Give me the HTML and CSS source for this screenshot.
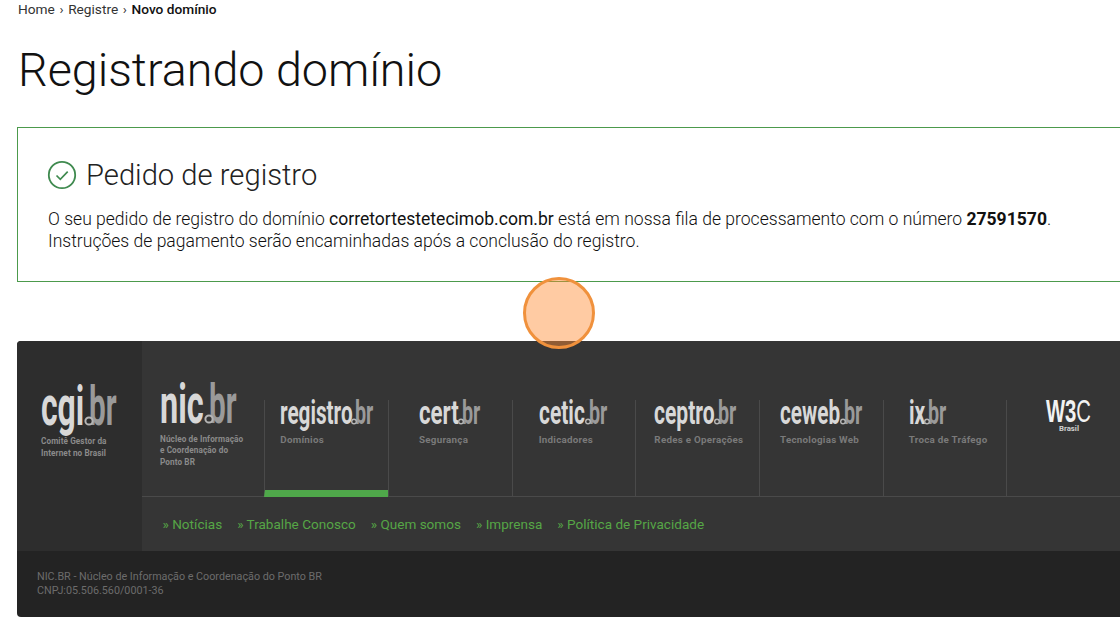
FILE: index.html
```html
<!DOCTYPE html>
<html lang="pt-BR">
<head>
    <meta charset="UTF-8">
    <meta name="viewport" content="width=device-width, initial-scale=1.0">
    <title>Registrando domínio</title>
    <link rel="stylesheet" href="styles.css">
</head>
<body>
    <nav class="breadcrumb">
        <a>Home</a><span class="sep">›</span><a>Registre</a><span class="sep">›</span><strong>Novo domínio</strong>
    </nav>

    <h1 class="page-title">Registrando domínio</h1>

    <section class="notice">
        <h2 class="notice-title">
            <svg class="check" width="30" height="30" viewBox="0 0 30 30" fill="none" stroke="#3f8a4f">
                <circle cx="15" cy="15" r="13.2" stroke-width="1.8"/>
                <path d="M9.5 15.5l3.8 3.8 7.4-7.6" stroke-width="1.7"/>
            </svg>
            Pedido de registro
        </h2>
        <p class="notice-text">O seu pedido de registro do domínio <b class="dom">corretortestetecimob.com.br</b> está em nossa fila de processamento com o número <b>27591570</b>.<br>Instruções de pagamento serão encaminhadas após a conclusão do registro.</p>
    </section>

    <footer class="site-footer">
        <div class="footer-top">
            <div class="cgi-col">
                <svg class="logo" width="78" height="46">
                    <text class="logo-name" transform="translate(0 41) scale(.57 1)" font-size="56">cgi</text>
                    <text class="logo-br" transform="translate(48 41) scale(.53 1)" font-size="56">br</text>
                    <circle class="logo-ring" cx="48" cy="37" r="3.6"/>
                </svg>
                <p class="logo-label big">Comitê Gestor da<br>Internet no Brasil</p>
            </div>
            <div class="main-col">
                <div class="org-nav">
                    <div class="nic-col">
                        <svg class="logo" width="78" height="44.5">
                            <text class="logo-name" transform="translate(0 40) scale(.58 1)" font-size="56">nic</text>
                            <text class="logo-br" transform="translate(49 40) scale(.53 1)" font-size="56">br</text>
                            <circle class="logo-ring" cx="49" cy="36" r="3.6"/>
                        </svg>
                        <p class="logo-label big">Núcleo de Informação<br>e Coordenação do<br>Ponto BR</p>
                    </div>
                    <div class="org-item item-registro active">
                        <svg class="logo" width="95" height="33">
                            <text class="logo-name" transform="translate(0 24) scale(.61 1)" font-size="34">registro</text>
                            <text class="logo-br" transform="translate(75 24) scale(.58 1)" font-size="34">br</text>
                            <circle class="logo-ring small" cx="74" cy="21.5" r="2.3"/>
                        </svg>
                        <span class="logo-label">Domínios</span>
                    </div>
                    <div class="org-item item-cert">
                        <svg class="logo" width="64" height="33">
                            <text class="logo-name" transform="translate(0 24) scale(.655 1)" font-size="34">cert</text>
                            <text class="logo-br" transform="translate(43 24) scale(.58 1)" font-size="34">br</text>
                            <circle class="logo-ring small" cx="42" cy="21.5" r="2.3"/>
                        </svg>
                        <span class="logo-label">Segurança</span>
                    </div>
                    <div class="org-item item-cetic">
                        <svg class="logo" width="72" height="33">
                            <text class="logo-name" transform="translate(0 24) scale(.617 1)" font-size="34">cetic</text>
                            <text class="logo-br" transform="translate(50 24) scale(.58 1)" font-size="34">br</text>
                            <circle class="logo-ring small" cx="49" cy="21.5" r="2.3"/>
                        </svg>
                        <span class="logo-label">Indicadores</span>
                    </div>
                    <div class="org-item item-ceptro">
                        <svg class="logo" width="85" height="33">
                            <text class="logo-name" transform="translate(0 24) scale(.62 1)" font-size="34">ceptro</text>
                            <text class="logo-br" transform="translate(64 24) scale(.58 1)" font-size="34">br</text>
                            <circle class="logo-ring small" cx="63" cy="21.5" r="2.3"/>
                        </svg>
                        <span class="logo-label">Redes e Operações</span>
                    </div>
                    <div class="org-item item-ceweb">
                        <svg class="logo" width="84" height="33">
                            <text class="logo-name" transform="translate(0 24) scale(.61 1)" font-size="34">ceweb</text>
                            <text class="logo-br" transform="translate(64 24) scale(.58 1)" font-size="34">br</text>
                            <circle class="logo-ring small" cx="63" cy="21.5" r="2.3"/>
                        </svg>
                        <span class="logo-label">Tecnologias Web</span>
                    </div>
                    <div class="org-item item-ix">
                        <svg class="logo" width="40" height="33">
                            <text class="logo-name" transform="translate(0 24) scale(.62 1)" font-size="34">ix</text>
                            <text class="logo-br" transform="translate(19 24) scale(.58 1)" font-size="34">br</text>
                            <circle class="logo-ring small" cx="18" cy="21.5" r="2.3"/>
                        </svg>
                        <span class="logo-label">Troca de Tráfego</span>
                    </div>
                    <div class="org-item item-w3c">
                        <svg class="logo" width="48" height="34">
                            <text class="w3c-mark" x="0" y="22" font-size="31" textLength="45" lengthAdjust="spacingAndGlyphs"><tspan class="w3c-bold">W3</tspan>C</text>
                            <text class="w3c-sub" x="13" y="31" font-size="7" textLength="20" lengthAdjust="spacingAndGlyphs">Brasil</text>
                        </svg>
                    </div>
                </div>
                <div class="footer-links">
                    <a>» Notícias</a>
                    <a>» Trabalhe Conosco</a>
                    <a>» Quem somos</a>
                    <a>» Imprensa</a>
                    <a>» Política de Privacidade</a>
                </div>
            </div>
        </div>
        <div class="footer-legal">
            NIC.BR - Núcleo de Informação e Coordenação do Ponto BR<br>
            CNPJ:05.506.560/0001-36
        </div>
    </footer>

    <div class="click-marker"></div>
</body>
</html>
```

FILE: styles.css
```css
html, body {
    height: 100%;
}
body {
    margin: 0;
    width: 1120px;
    height: 626px;
    overflow: hidden;
    position: relative;
    background: #fff;
    color: #222;
    font-family: Roboto, "Liberation Sans", sans-serif;
}

.breadcrumb {
    margin-left: 18px;
    height: 18px;
    line-height: 18px;
    font-size: 13.7px;
    color: #333;
}
.breadcrumb .sep {
    margin: 0 4.6px;
}
.breadcrumb strong {
    font-weight: 500;
    color: #111;
}

.page-title {
    margin: 19px 0 0 18px;
    height: 90px;
    font-size: 46.7px;
    line-height: 67px;
    font-weight: 300;
    color: #111;
}

.notice {
    box-sizing: border-box;
    width: 1200px;
    height: 155px;
    margin-left: 17px;
    padding: 29px 30px 0;
    border: 1px solid #4c9a4c;
}
.notice-title {
    display: flex;
    align-items: center;
    gap: 9px;
    margin: 0 0 16px;
    height: 36px;
    font-size: 29.2px;
    font-weight: 300;
    color: #222;
}
.check {
    margin-left: -1px;
}
.notice-text {
    margin: 0;
    font-size: 17.56px;
    line-height: 21.5px;
    font-weight: 300;
    color: #111;
}
.notice-text b {
    font-weight: 700;
}
.notice-text .dom {
    font-weight: 400;
}

.site-footer {
    width: 1200px;
    margin: 59px 0 0 17px;
    border-radius: 4px 0 0 4px;
    overflow: hidden;
}
.footer-top {
    display: flex;
    height: 210px;
    background: #353535;
}
.cgi-col {
    width: 125px;
    padding: 43px 0 0 24px;
    box-sizing: border-box;
    background: #2d2d2d;
}
.main-col {
    flex: 1;
    display: flex;
    flex-direction: column;
}

.org-nav {
    display: flex;
    align-items: flex-end;
    height: 156px;
    box-sizing: border-box;
    border-bottom: 1px solid #4a4a4a;
}
.nic-col {
    width: 122.3px;
    align-self: flex-start;
    padding: 42px 0 0 18px;
    box-sizing: border-box;
}
.org-item {
    box-sizing: border-box;
    width: 123.7px;
    height: 96px;
    border-left: 1px solid #4a4a4a;
}
.org-item.active {
    height: 97px;
    margin-bottom: -1px;
    border-bottom: 7px solid #4fa84a;
}
.item-registro { padding-left: 15px; }
.item-cert { padding-left: 30px; }
.item-cetic { padding-left: 26px; }
.item-ceptro { padding-left: 18px; }
.item-ceweb { padding-left: 20px; }
.item-ix { padding-left: 25px; }
.item-w3c { padding-left: 39px; }

.logo {
    display: block;
    overflow: visible;
}
.logo-name,
.logo-br {
    font-family: Roboto, sans-serif;
    font-weight: 700;
}
.logo-name {
    fill: #d8d8d8;
}
.logo-br {
    fill: #9a9a9a;
}
.logo-ring {
    fill: #353535;
    stroke: #b5b5b5;
    stroke-width: 2;
}
.cgi-col .logo-ring {
    fill: #2d2d2d;
}
.logo-ring.small {
    stroke-width: 1.4;
}
.w3c-mark {
    font-family: "Liberation Sans", sans-serif;
    fill: #f2f2f2;
}
.w3c-bold {
    font-weight: 700;
}
.w3c-sub {
    font-family: Roboto, sans-serif;
    font-weight: 700;
    fill: #cfcfcf;
}
.logo-label {
    display: block;
    margin: 1px 0 0;
    font-size: 9.8px;
    line-height: 11px;
    font-weight: 700;
    letter-spacing: 0.25px;
    color: #7a7a7a;
}
.logo-label.big {
    margin-top: 6px;
    font-size: 8.2px;
    line-height: 11.5px;
    letter-spacing: 0.1px;
    color: #8a8a8a;
}

.footer-links {
    flex: 1;
    display: flex;
    align-items: center;
    gap: 15px;
    padding-left: 20.5px;
    font-size: 13.55px;
    color: #56a646;
}

.footer-legal {
    box-sizing: border-box;
    height: 66px;
    padding: 19px 20px 0;
    background: #232323;
    font-size: 10.75px;
    line-height: 14px;
    color: #6c6c6c;
}

/* marca do clique, fica por cima da pagina */
.click-marker {
    position: absolute;
    left: 523px;
    top: 277px;
    width: 72px;
    height: 72px;
    box-sizing: border-box;
    border: 3px solid #f0913c;
    border-radius: 50%;
    background: rgba(255, 140, 50, 0.45);
}
```
